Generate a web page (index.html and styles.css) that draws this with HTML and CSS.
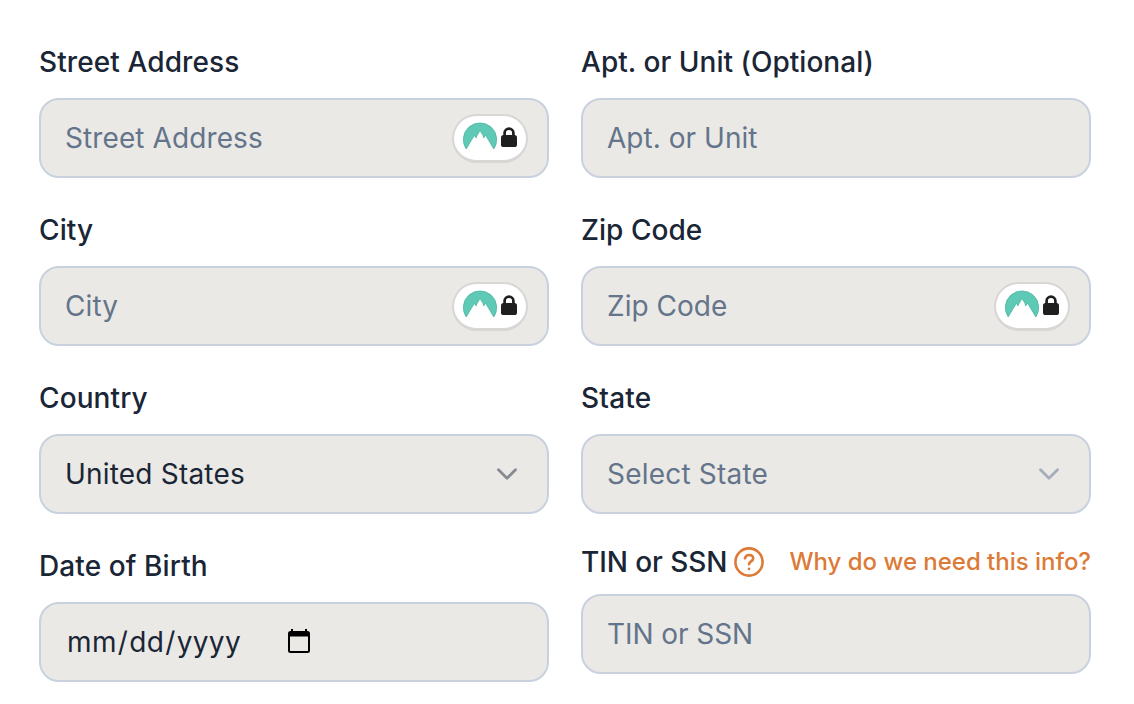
FILE: index.html
```html
<!DOCTYPE html>
<html lang="en">
<head>
<meta charset="utf-8">
<title>Address</title>
<link rel="stylesheet" href="styles.css">
</head>
<body>
<svg width="0" height="0" class="sprite">
  <symbol id="vault" viewBox="0 0 56 28">
    <path d="M4.200 27A16.700 16.700 0 1 1 31.800 27L23.600 13.200L21.700 16L21 13.400L18 8.400L14.400 14.800L14.200 16L12.300 13.400Z" fill="#5ecab5" stroke="#45b29e" stroke-width=".7"/>
    <path d="M42.600 14V10.900A4.400 4.200 0 0 1 51.400 10.900V14" fill="none" stroke="#1f1f1f" stroke-width="2.700"/>
    <rect x="39" y="13" width="16" height="12" rx="2.600" fill="#1f1f1f"/>
  </symbol>
  <symbol id="chevron" viewBox="0 0 20 12">
    <path d="M1.500 1.800L10 10.300L18.500 1.800" fill="none" stroke="currentColor" stroke-width="2.800" stroke-linecap="round" stroke-linejoin="round"/>
  </symbol>
</svg>
<form class="form">
  <div class="column">
    <div class="field">
      <span class="label">Street Address</span>
      <div class="control"><span class="placeholder">Street Address</span><span class="vault"><svg width="56" height="28"><use href="#vault"/></svg></span></div>
    </div>
    <div class="field">
      <span class="label">City</span>
      <div class="control"><span class="placeholder">City</span><span class="vault"><svg width="56" height="28"><use href="#vault"/></svg></span></div>
    </div>
    <div class="field">
      <span class="label">Country</span>
      <div class="control select"><span class="value">United States</span><svg class="chevron" width="20" height="12"><use href="#chevron"/></svg></div>
    </div>
    <div class="field">
      <span class="label">Date of Birth</span>
      <div class="control"><span class="date">mm<i>/</i>dd<i>/</i>yyyy</span>
        <svg class="calendar" width="22" height="24" viewBox="0 0 22 24"><path d="M4 0V4M18 0V4" stroke="#000" stroke-width="2"/><rect x="1" y="3" width="20" height="20" rx="1.500" fill="none" stroke="#000" stroke-width="2"/><path d="M1 3H21V7.500H1Z"/></svg>
      </div>
    </div>
  </div>
  <div class="column">
    <div class="field">
      <span class="label tight">Apt. or Unit (Optional)</span>
      <div class="control"><span class="placeholder tight">Apt. or Unit</span></div>
    </div>
    <div class="field">
      <span class="label tight">Zip Code</span>
      <div class="control"><span class="placeholder tight">Zip Code</span><span class="vault"><svg width="56" height="28"><use href="#vault"/></svg></span></div>
    </div>
    <div class="field">
      <span class="label loose">State</span>
      <div class="control select"><span class="placeholder loose">Select State</span><svg class="chevron muted" width="20" height="12"><use href="#chevron"/></svg></div>
    </div>
    <div class="field tin">
      <div class="label-row"><span class="label tighter">TIN or SSN</span>
        <svg class="help" width="30" height="30" viewBox="0 0 30 30" fill="none" stroke="#dd7a36" stroke-width="2.600" stroke-linecap="round" stroke-linejoin="round"><circle cx="15" cy="15" r="13.600"/><path d="M10.900 11.300C11.500 9.200 13.100 8 15.100 8C17.500 8 19.200 9.400 19.200 11.500C19.200 14.300 15 14.500 15 17.300"/><path d="M15 21.800V21.900"/></svg>
        <a class="why">Why do we need this info?</a></div>
      <div class="control"><span class="placeholder tighter">TIN or SSN</span></div>
    </div>
  </div>
</form>
</body>
</html>
```
FILE: styles.css
```css
* { box-sizing: border-box; }
body { margin: 0; background: #fff; font-family: Inter, "Liberation Sans", sans-serif; font-size: 28px; color: #1a2635; }
.sprite { position: absolute; }
.form { display: grid; grid-template-columns: 510px 510px; gap: 32px; padding: 42px 0 0 39px; }
.column, .field { display: flex; flex-direction: column; }
.column { gap: 32px; }
.field { gap: 16px; }
.label { line-height: 40px; font-weight: 500; white-space: nowrap; letter-spacing: .1px; }
.control { display: flex; align-items: center; height: 80px; padding: 0 20px 0 24px; border: 2px solid #c9d1de; border-radius: 20px; background: #eae9e5; line-height: 40px; letter-spacing: .1px; white-space: nowrap; }
.placeholder { color: #64748b; }
.tight { letter-spacing: .03px; }
.tighter { letter-spacing: -.07px; }
.loose { letter-spacing: .2px; }
.vault { display: flex; align-items: center; justify-content: center; width: 76px; height: 49px; margin-left: auto; margin-right: -1px; padding-bottom: 4px; border: 2px solid #d8d7d6; border-bottom-width: 3px; border-radius: 25px; background: #fff; }
.select { padding-right: 30px; }
.value { letter-spacing: .2px; }
.chevron { margin-left: auto; color: #858b91; }
.chevron.muted { color: #a5aeba; }
.date { margin-left: 2px; letter-spacing: .35px; }
.date i { font-style: normal; padding: 0 1px; }
.calendar { margin: 0 0 2px 47px; }
.tin { gap: 12px; margin-top: -4px; }
.label-row { display: flex; align-items: center; height: 40px; }
.help { margin-left: 7px; }
.why { margin: 0 0 1px auto; color: #dd7a36; font-size: 24px; font-weight: 500; letter-spacing: -.02px; white-space: nowrap; }
```
